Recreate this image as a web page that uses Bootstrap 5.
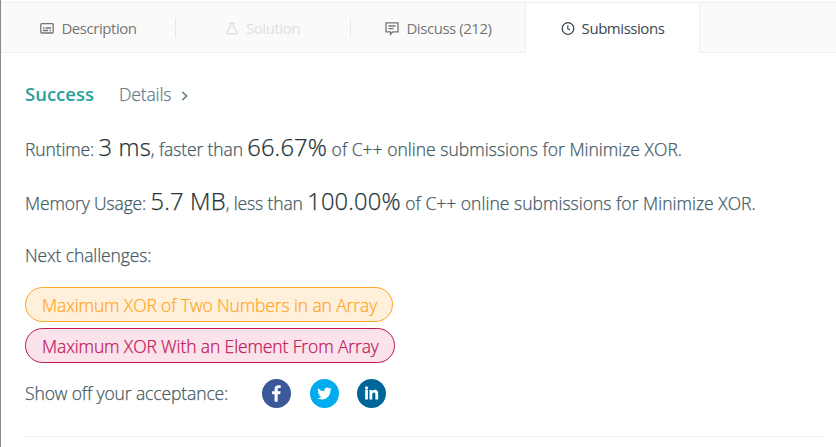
<!DOCTYPE html>
<html lang="en">
<head>
<meta charset="utf-8">
<meta name="viewport" content="width=device-width, initial-scale=1">
<title>Submissions - Minimize XOR</title>
<link href="https://cdn.jsdelivr.net/npm/bootstrap@5.3.0/dist/css/bootstrap.min.css" rel="stylesheet">
<style>
body{font-family:"Segoe UI","Open Sans","Noto Sans",sans-serif;font-size:17.5px;font-weight:300;color:#455a64;height:447px;overflow:hidden;border-left:1px solid #8a8a8a}
.tabbar{height:51px;margin-top:2px;background:#fafafa;border-top:1px solid #eee;border-bottom:1px solid #eee}
.tab-item{width:175px;height:49px;font-size:15px;font-weight:400;letter-spacing:-.45px;color:#757575;padding:2px 0 0;position:relative;text-decoration:none}
.tab-item svg{width:14px;height:14px;margin-right:7px;flex:none}
.tab-split::after{content:"";width:1px;height:20px;background:#e8e8e8;position:absolute;right:0;top:15px}
.tab-off{color:#e0e0e0;padding-right:2px}
.tab-on{height:50px;width:175px;margin-left:-1px;padding-top:1px;background:#fff;color:#37474f;border-left:1px solid #eee;border-right:1px solid #eee}
.result{padding:0 12px 0 24px}
.line,.details,.tagpill,.showoff{-webkit-text-stroke:.25px currentColor}
.status{height:67px;padding-top:15px}
.line{line-height:54px;height:54px;white-space:nowrap}
.big{font-size:23.7px;letter-spacing:.15px;color:#263238}
.t{letter-spacing:-.12px}
.tail{letter-spacing:.02px}
.ok{font-size:18.5px;font-weight:600;color:#2aa198;margin-right:25px}
.details{color:#607d8b;text-decoration:none}
.pills{gap:6px;margin-top:5px}
.tagpill{height:35px;line-height:34px;border:1px solid;border-radius:18px;padding:0 16px;text-decoration:none;white-space:nowrap}
.medium{width:368px;color:#ffa726;background:#fff0dc;border-color:#ffa726}
.hard{width:370px;color:#c2185b;background:#fbe3eb;border-color:#c2185b}
.share{height:60px}
.share svg{width:29px;height:29px;flex:none;margin-right:18.5px}
.showoff{width:237px}
.rule{border-top:1px solid #eee;margin-top:13px}
</style>
</head>
<body class="bg-white">
<nav class="tabbar d-flex">
  <a class="tab-item tab-split d-flex align-items-center justify-content-center" href="#"><svg viewBox="0 0 14 14" fill="none" stroke="currentColor" stroke-width="1.3"><rect x=".8" y="1.600" width="12.400" height="9.400" rx="1"/><path d="M3 6h1.500M5.500 6H11M3 8.500h5M9.500 8.500H11"/></svg><span>Description</span></a>
  <a class="tab-item tab-off tab-split d-flex align-items-center justify-content-center" href="#"><svg viewBox="0 0 14 14" fill="none" stroke="currentColor" stroke-width="1.4"><path d="M4.200 1.200h5.600M5.500 1.500v3.400L1.900 10.300Q1.300 11.800 2.800 11.900h8.400Q12.700 11.800 12.100 10.300L8.500 4.900V1.500"/></svg><span>Solution</span></a>
  <a class="tab-item d-flex align-items-center justify-content-center" href="#"><svg viewBox="0 0 14 14" fill="none" stroke="currentColor" stroke-width="1.3"><path d="M1 .9h12v9H7.800L5.500 12.300V9.900H1zM3.500 4h7M3.500 6.700h5"/></svg><span>Discuss (212)</span></a>
  <a class="tab-item tab-on d-flex align-items-center justify-content-center" href="#"><svg viewBox="0 0 14 14" fill="none" stroke="currentColor" stroke-width="1.3"><circle cx="7" cy="6.500" r="5.800"/><path d="M6.800 3.200v3.500l2.200 1.400" stroke-width="1.200"/></svg><span>Submissions</span></a>
</nav>
<main class="result">
  <div class="status d-flex align-items-center">
    <span class="ok">Success</span>
    <a class="details d-flex align-items-center" href="#"><span class="t">Details</span><svg class="ms-2 mt-1" width="10" height="10" viewBox="0 0 10 10" fill="none" stroke="currentColor" stroke-width="1.700"><path d="M3.500 1l4 4-4 4"/></svg></a>
  </div>
  <div class="line"><span class="t">Runtime: </span><span class="big">3 ms</span><span class="t">, faster than </span><span class="big">66.67%</span><span class="tail"> of C++ online submissions for Minimize XOR.</span></div>
  <div class="line"><span class="t">Memory Usage: </span><span class="big">5.7 MB</span><span class="t">, less than </span><span class="big">100.00%</span><span class="tail"> of C++ online submissions for Minimize XOR.</span></div>
  <div class="line t">Next challenges:</div>
  <div class="pills d-flex flex-column align-items-start">
    <a class="tagpill medium t" href="#">Maximum XOR of Two Numbers in an Array</a>
    <a class="tagpill hard t" href="#">Maximum XOR With an Element From Array</a>
  </div>
  <div class="share d-flex align-items-center">
    <span class="t showoff">Show off your acceptance:</span>
    <svg viewBox="0 0 64 64"><circle cx="32" cy="32" r="32" fill="#3b5998"/><path fill="#fff" transform="translate(-7 -7) scale(1.220)" d="M34.100 47V33.300h4.600l.7-5.300h-5.300v-3.400c0-1.500.4-2.600 2.600-2.600h2.800v-4.800c-.5-.1-2.200-.2-4.100-.2-4.100 0-6.900 2.500-6.900 7V28H24v5.300h4.500V47h5.600z"/></svg>
    <svg viewBox="0 0 64 64"><circle cx="32" cy="32" r="32" fill="#00aced"/><path fill="#fff" d="M48 22.100c-1.200.5-2.400.9-3.800 1 1.400-.8 2.400-2.100 2.900-3.600-1.300.8-2.700 1.300-4.200 1.600C41.700 19.800 40 19 38.200 19c-3.600 0-6.600 2.900-6.600 6.600 0 .5.100 1 .2 1.500-5.500-.3-10.300-2.900-13.500-6.900-.6 1-.9 2.100-.9 3.300 0 2.300 1.200 4.300 2.900 5.500-1.100 0-2.100-.3-3-.8v.1c0 3.200 2.300 5.800 5.300 6.400-.6.1-1.100.2-1.700.2-.4 0-.8 0-1.200-.1.800 2.600 3.300 4.500 6.100 4.600-2.200 1.800-5.100 2.800-8.200 2.800-.5 0-1.100 0-1.600-.1 2.900 1.900 6.400 2.900 10.100 2.900 12.100 0 18.700-10 18.700-18.700v-.8c1.300-1 2.400-2.200 3.200-3.400z"/></svg>
    <svg viewBox="0 0 64 64"><circle cx="32" cy="32" r="32" fill="#006699"/><path fill="#fff" transform="translate(-5 -7.500) scale(1.130 1.200)" d="M20.400 44h5.400V26.600h-5.400V44zm2.700-18c1.700 0 3.100-1.400 3.100-3.100S24.800 19.700 23.100 19.700 20 21.100 20 22.900 21.400 26 23.100 26zm17.200 18h5.400v-9.500c0-4.700-1-8.300-6.500-8.300-2.600 0-4.400 1.500-5.100 2.800H34v-2.400h-5.200V44h5.400v-8.600c0-2.300.4-4.500 3.200-4.500s2.900 2.700 2.900 4.600V44z"/></svg>
  </div>
  <div class="rule"></div>
</main>
<script src="https://cdn.jsdelivr.net/npm/bootstrap@5.3.0/dist/js/bootstrap.bundle.min.js"></script>
</body>
</html>
